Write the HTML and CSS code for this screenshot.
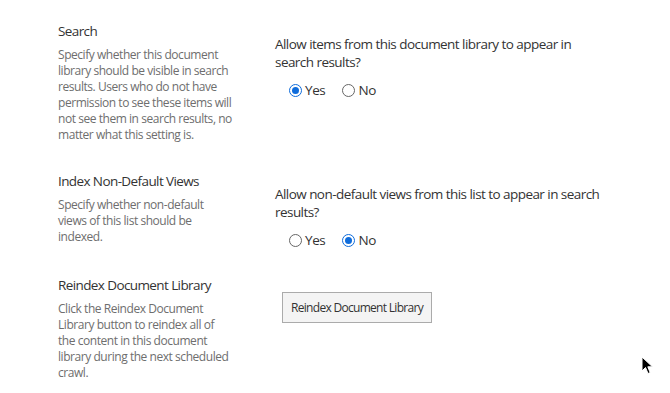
FILE: index.html
```html
<!DOCTYPE html>
<html>
<head>
<meta charset="utf-8">
<link rel="stylesheet" href="styles.css">
</head>
<body>
<div class="page">
  <div class="row row-search">
    <div class="left">
      <div class="title">Search</div>
      <div class="desc">Specify whether this document library should be visible in search results. Users who do not have permission to see these items will not see them in search results, no matter what this setting is.</div>
    </div>
    <div class="right">
      <div class="question">Allow items from this document library to appear in search results?</div>
      <div class="radios">
        <span class="radio"><span class="dot on"></span>Yes</span>
        <span class="radio"><span class="dot"></span>No</span>
      </div>
    </div>
  </div>
  <div class="row row-views">
    <div class="left">
      <div class="title">Index Non-Default Views</div>
      <div class="desc">Specify whether non-default views of this list should be indexed.</div>
    </div>
    <div class="right">
      <div class="question">Allow non-default views from this list to appear in search results?</div>
      <div class="radios">
        <span class="radio"><span class="dot"></span>Yes</span>
        <span class="radio"><span class="dot on"></span>No</span>
      </div>
    </div>
  </div>
  <div class="row">
    <div class="left">
      <div class="title">Reindex Document Library</div>
      <div class="desc">Click the Reindex Document Library button to reindex all of the content in this document library during the next scheduled crawl.</div>
    </div>
    <div class="right right-btn">
      <button class="btn">Reindex Document Library</button>
    </div>
  </div>
</div>
<svg class="cursor" width="14" height="20" viewBox="0 0 14 20">
  <path d="M1 1 L1 15 L4.5 11.5 L7 17.5 L9.2 16.6 L6.8 10.8 L11.5 10.8 Z" fill="#000" stroke="#fff" stroke-width="1"/>
</svg>
</body>
</html>
```

FILE: styles.css
```css
html, body {
  margin: 0;
  padding: 0;
  background: #fff;
}
body {
  font-family: "Open Sans", "Noto Sans", sans-serif;
  width: 670px;
  height: 393px;
  overflow: hidden;
  position: relative;
}
.page {
  padding: 20px 0 0 58px;
}
.row {
  display: flex;
}
.row-search {
  min-height: 150px;
}
.row-views {
  min-height: 104px;
}
.left {
  width: 217px;
  flex: none;
}
.title {
  font-size: 13.5px;
  letter-spacing: -0.6px;
  line-height: 22px;
  color: #333;
  margin-bottom: 5px;
}
.desc {
  width: 175px;
  font-size: 12px;
  letter-spacing: -0.45px;
  line-height: 16px;
  color: #6e6e6e;
}
.right {
  padding-top: 15px;
  width: 332px;
}
.question {
  font-size: 13.5px;
  letter-spacing: -0.55px;
  line-height: 18px;
  color: #333;
}
.radios {
  display: flex;
  gap: 17px;
  margin-top: 9px;
  padding-left: 14px;
  font-size: 13.5px;
  letter-spacing: -0.4px;
  line-height: 20px;
  color: #333;
}
.radio {
  display: inline-flex;
  align-items: center;
  gap: 3px;
}
.dot {
  width: 11px;
  height: 11px;
  border: 1px solid #666;
  border-radius: 50%;
  box-sizing: content-box;
  position: relative;
}
.dot.on {
  border-color: #0f6cdb;
}
.dot.on::after {
  content: "";
  position: absolute;
  left: 2px;
  top: 2px;
  width: 7px;
  height: 7px;
  border-radius: 50%;
  background: #0f6cdb;
}
.right-btn {
  padding-top: 18px;
  padding-left: 7px;
}
.btn {
  font-family: inherit;
  font-size: 12px;
  letter-spacing: -0.7px;
  color: #333;
  background: #f4f4f4;
  border: 1px solid #ababab;
  height: 31px;
  padding: 0;
  white-space: nowrap;
  width: 150px;
}
.cursor {
  position: absolute;
  left: 641px;
  top: 356px;
}
```
